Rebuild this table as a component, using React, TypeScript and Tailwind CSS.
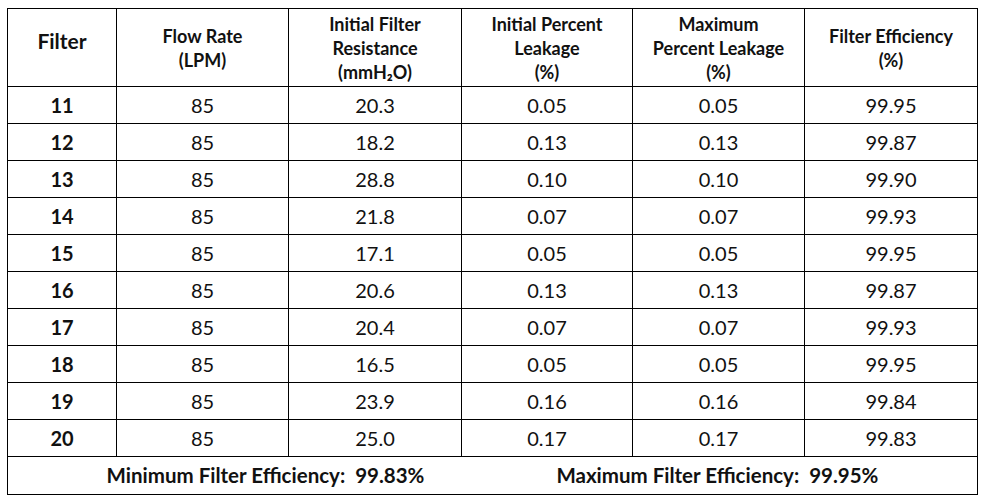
import React from "react";

const rows: [string, string, string, string, string, string][] = [
  ["11", "85", "20.3", "0.05", "0.05", "99.95"],
  ["12", "85", "18.2", "0.13", "0.13", "99.87"],
  ["13", "85", "28.8", "0.10", "0.10", "99.90"],
  ["14", "85", "21.8", "0.07", "0.07", "99.93"],
  ["15", "85", "17.1", "0.05", "0.05", "99.95"],
  ["16", "85", "20.6", "0.13", "0.13", "99.87"],
  ["17", "85", "20.4", "0.07", "0.07", "99.93"],
  ["18", "85", "16.5", "0.05", "0.05", "99.95"],
  ["19", "85", "23.9", "0.16", "0.16", "99.84"],
  ["20", "85", "25.0", "0.17", "0.17", "99.83"],
];

export default function App() {
  return (
    <div
      className="w-[983px] h-[503px] bg-white pl-[7px] pt-[8px] text-[#111]"
      style={{ fontFamily: "Lato, 'Open Sans', sans-serif" }}
    >
      <table className="border-collapse table-fixed w-[970px]">
        <colgroup>
          <col className="w-[109px]" />
          <col className="w-[172px]" />
          <col className="w-[173px]" />
          <col className="w-[171px]" />
          <col className="w-[172px]" />
          <col className="w-[173px]" />
        </colgroup>
        <thead>
          <tr className="h-[78px]">
            <th className="border border-black text-[21px] font-bold leading-6 align-middle pb-[14px]">
              Filter
            </th>
            <th className="border border-black text-[18px] font-bold leading-6 align-middle">
              Flow Rate
              <br />
              (LPM)
            </th>
            <th className="border border-black text-[18px] font-bold leading-6 align-middle">
              Initial Filter
              <br />
              Resistance
              <br />
              (mmH₂O)
            </th>
            <th className="border border-black text-[18px] font-bold leading-6 align-middle">
              Initial Percent
              <br />
              Leakage
              <br />
              (%)
            </th>
            <th className="border border-black text-[18px] font-bold leading-6 align-middle">
              Maximum
              <br />
              Percent Leakage
              <br />
              (%)
            </th>
            <th className="border border-black text-[18px] font-bold leading-6 align-middle">
              Filter Efficiency
              <br />
              (%)
            </th>
          </tr>
        </thead>
        <tbody>
          {rows.map((r) => (
            <tr key={r[0]} className="h-[37px]">
              <td className="border border-black text-center text-[20px] font-bold leading-none p-0">
                {r[0]}
              </td>
              {r.slice(1).map((c, i) => (
                <td
                  key={i}
                  className="border border-black text-center text-[20px] leading-none p-0"
                >
                  {c}
                </td>
              ))}
            </tr>
          ))}
          <tr className="h-[38px]">
            <td colSpan={6} className="border border-black p-0">
              <div className="flex justify-center gap-[132px] text-[20.5px] font-bold whitespace-pre">
                <span>Minimum Filter Efficiency:  99.83%</span>
                <span>Maximum Filter Efficiency:  99.95%</span>
              </div>
            </td>
          </tr>
        </tbody>
      </table>
    </div>
  );
}
